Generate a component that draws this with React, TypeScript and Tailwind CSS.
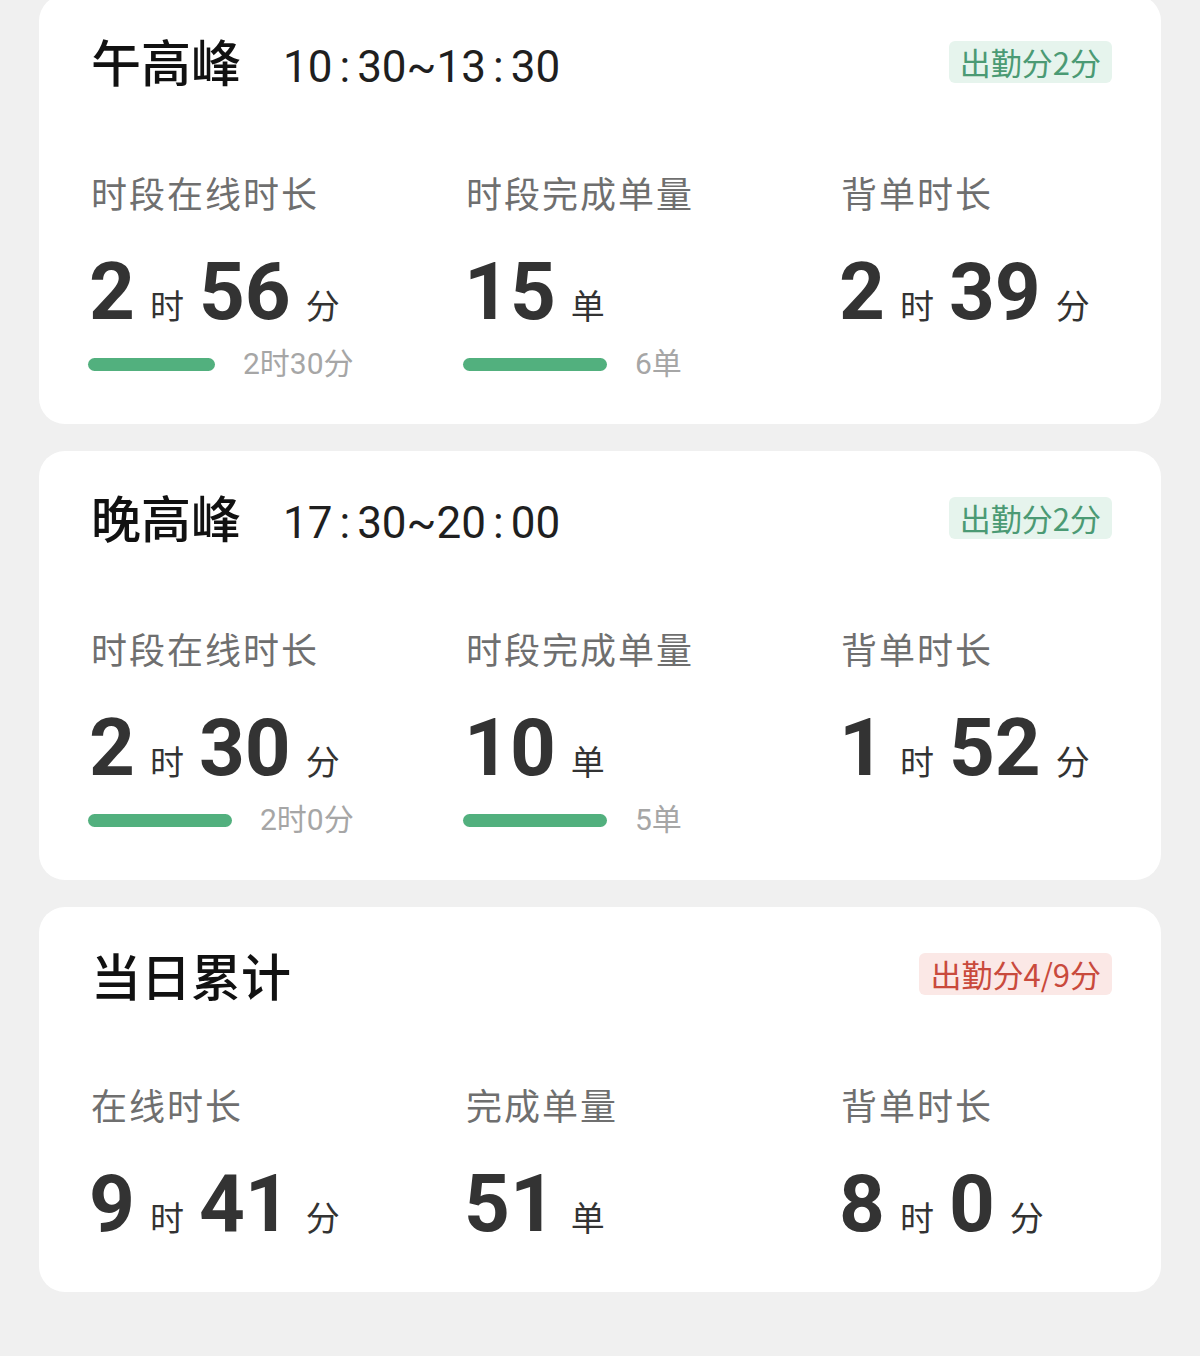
import React from "react";

type Part = [string, string];

type Metric = {
  label: string;
  parts: Part[];
  bar?: { w: number; text: string };
};

type Card = {
  title: string;
  time?: [string, string, string, string];
  badge: string;
  tone: "green" | "red";
  metrics: Metric[];
};

const cards: Card[] = [
  {
    title: "午高峰",
    time: ["10", "30", "13", "30"],
    badge: "出勤分2分",
    tone: "green",
    metrics: [
      { label: "时段在线时长", parts: [["2", "时"], ["56", "分"]], bar: { w: 127, text: "2时30分" } },
      { label: "时段完成单量", parts: [["15", "单"]], bar: { w: 144, text: "6单" } },
      { label: "背单时长", parts: [["2", "时"], ["39", "分"]] },
    ],
  },
  {
    title: "晚高峰",
    time: ["17", "30", "20", "00"],
    badge: "出勤分2分",
    tone: "green",
    metrics: [
      { label: "时段在线时长", parts: [["2", "时"], ["30", "分"]], bar: { w: 144, text: "2时0分" } },
      { label: "时段完成单量", parts: [["10", "单"]], bar: { w: 144, text: "5单" } },
      { label: "背单时长", parts: [["1", "时"], ["52", "分"]] },
    ],
  },
  {
    title: "当日累计",
    badge: "出勤分4/9分",
    tone: "red",
    metrics: [
      { label: "在线时长", parts: [["9", "时"], ["41", "分"]] },
      { label: "完成单量", parts: [["51", "单"]] },
      { label: "背单时长", parts: [["8", "时"], ["0", "分"]] },
    ],
  },
];

function TimeRange({ t }: { t: [string, string, string, string] }) {
  return (
    <span className="ml-[42px] font-['Roboto','Noto_Sans_CJK_SC',sans-serif] text-[44px] leading-none text-[#1f1f1f]">
      {t[0]}
      <span className="mx-[7px]">:</span>
      {t[1]}~{t[2]}
      <span className="mx-[7px]">:</span>
      {t[3]}
    </span>
  );
}

function MetricCell({ m, showBarRow }: { m: Metric; showBarRow: boolean }) {
  return (
    <div className="flex flex-col">
      <div className="h-[40px] text-[36px] leading-[40px] tracking-[2px] text-[#6f6f6f]">{m.label}</div>
      <div className="mt-[40px] -ml-[2px] flex h-[80px] items-baseline leading-none text-[#333333]">
        {m.parts.map(([num, unit], i) => (
          <React.Fragment key={i}>
            <span className="font-['Roboto',sans-serif] text-[80px] font-bold leading-none">{num}</span>
            <span className="mx-[15px] text-[34px] leading-none">{unit}</span>
          </React.Fragment>
        ))}
      </div>
      {showBarRow && (
        <div className="mt-[17px] flex h-[30px] items-center">
          {m.bar && (
            <>
              <div className="-ml-[3px] h-[13px] rounded-full bg-[#52b07e]" style={{ width: m.bar.w }} />
              <span className="ml-[28px] font-['Roboto','Noto_Sans_CJK_SC',sans-serif] text-[30px] leading-none text-[#a6a6a6]">
                {m.bar.text}
              </span>
            </>
          )}
        </div>
      )}
    </div>
  );
}

function StatCard({ card, first }: { card: Card; first?: boolean }) {
  const hasBars = card.metrics.some((m) => m.bar);
  const badgeClass =
    card.tone === "green" ? "bg-[#e6f4ed] text-[#4b9a74]" : "bg-[#fbe8e6] text-[#c94a3c]";

  return (
    <div
      className={`rounded-[26px] bg-white pl-[52px] pr-[49px] pt-[40px] ${hasBars ? "pb-[45px]" : "pb-[48px]"} ${
        first ? "-mt-[5px]" : ""
      }`}
    >
      {/* header */}
      <div className="flex h-[54px] items-center">
        <div className="flex items-baseline">
          <span className="text-[50px] font-medium leading-none text-[#111111]">{card.title}</span>
          {card.time && <TimeRange t={card.time} />}
        </div>
        <span className={`ml-auto rounded-[6px] px-[11px] py-[5px] text-[31px] leading-[32px] ${badgeClass}`}>
          {card.badge}
        </span>
      </div>

      {/* metrics */}
      <div className="mt-[83px] grid grid-cols-[375px_375px_1fr]">
        {card.metrics.map((m, i) => (
          <MetricCell key={i} m={m} showBarRow={hasBars} />
        ))}
      </div>
    </div>
  );
}

export default function App() {
  return (
    <div className="h-[1356px] overflow-hidden bg-[#f0f0f0] font-['Noto_Sans_CJK_SC',sans-serif]">
      <div className="mx-[39px] flex flex-col gap-[27px]">
        {cards.map((c, i) => (
          <StatCard key={i} card={c} first={i === 0} />
        ))}
      </div>
    </div>
  );
}
